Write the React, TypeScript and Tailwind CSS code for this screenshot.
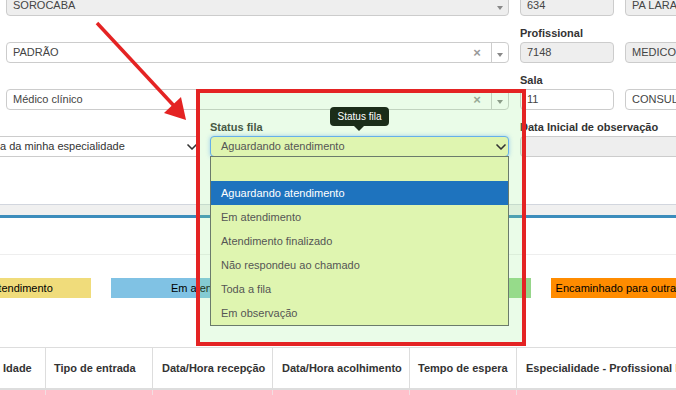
import React from 'react'
import { ChevronDown } from 'lucide-react'

// small grey caret used by the select2 style fields
const Caret = () => (
  <span className="mt-[4px] block h-0 w-0 border-l-[3px] border-r-[3px] border-t-[4px] border-l-transparent border-r-transparent border-t-[#888]" />
)

function Select2({ value, gray, clear }: { value: string; gray?: boolean; clear?: boolean }) {
  return (
    <div className={`flex h-[21px] w-[503px] shrink-0 items-stretch rounded-[4px] border border-[#ccc] ${gray ? 'bg-[#eee]' : 'bg-white'}`}>
      <span className="flex flex-1 items-center pl-[6px] text-[#444]">{value}</span>
      {clear && (
        <>
          <span className="flex w-[8px] items-center justify-center text-[13px] font-bold text-[#999]">×</span>
          <span className="ml-[10px] w-px bg-[#ccc]" />
        </>
      )}
      <span className="flex w-[16px] items-center justify-center">
        <Caret />
      </span>
    </div>
  )
}

function Input({ value, gray, w }: { value: string; gray?: boolean; w: string }) {
  return (
    <div className={`flex h-[21px] shrink-0 items-center whitespace-nowrap rounded-[4px] border border-[#ccc] pl-[6px] text-[#444] ${w} ${gray ? 'bg-[#eee]' : 'bg-white'}`}>
      {value}
    </div>
  )
}

const Label = ({ text, w }: { text: string; w: string }) => (
  <div className={`h-[14px] shrink-0 whitespace-nowrap text-[11px] font-bold leading-[14px] text-[#333] ${w}`}>{text}</div>
)

const legend = [
  { label: 'Aguardando atendimento', cls: 'bg-[#f0dc7b]' },
  { label: 'Em atendimento', cls: 'bg-[#80c2e4]' },
  { label: 'Atendimento finalizado', cls: 'bg-[#96d68a]' },
  { label: 'Encaminhado para outra especialidade', cls: 'bg-[#ff8c00]' },
]

const columns = [
  { name: 'Idade', w: 'w-[51px]' },
  { name: 'Tipo de entrada', w: 'w-[107px]' },
  { name: 'Data/Hora recepção', w: 'w-[120px] pl-[9px]' },
  { name: 'Data/Hora acolhimento', w: 'w-[137px] pl-[9px]' },
  { name: 'Tempo de espera', w: 'w-[107px]' },
  { name: 'Especialidade - Profissional Responsável', w: 'w-[300px] pl-[9px]' },
]

const options = ['Em atendimento', 'Atendimento finalizado', 'Não respondeu ao chamado', 'Toda a fila', 'Em observação']

export default function App() {
  return (
    <div className="relative h-[395px] w-[676px] overflow-hidden bg-white font-['Liberation_Sans',Arial,sans-serif] text-[11px]">
      {/* filter form box */}
      <div className="w-[800px] border-b border-[#d2d6de] px-[6px] pb-[47px]">
        <div className="-mt-[5px] flex gap-[11px]">
          <Select2 value="SOROCABA" gray />
          <Input value="634" gray w="w-[94px]" />
          <Input value="PA LARANJEIRAS" gray w="w-[160px]" />
        </div>

        <div className="mt-[10px] flex gap-[11px]">
          <Label text="" w="w-[503px]" />
          <Label text="Profissional" w="w-[94px]" />
        </div>
        <div className="mt-[2px] flex gap-[11px]">
          <Select2 value="PADRÃO" clear />
          <Input value="7148" gray w="w-[94px]" />
          <Input value="MEDICO CLINICO" gray w="w-[160px]" />
        </div>

        <div className="mt-[10px] flex gap-[11px]">
          <Label text="" w="w-[503px]" />
          <Label text="Sala" w="w-[94px]" />
        </div>
        <div className="mt-[2px] flex gap-[11px]">
          <Select2 value="Médico clínico" clear />
          <Input value="11" w="w-[94px]" />
          <Input value="CONSULTÓRIO 11" w="w-[160px]" />
        </div>

        <div className="mt-[10px] -ml-[12px] flex gap-[11px]">
          <Label text="" w="w-[205px]" />
          <Label text="Status fila" w="w-[299px]" />
          <Label text="Data Inicial de observação" w="w-[200px]" />
        </div>
        <div className="mt-[2px] -ml-[12px] flex gap-[11px]">
          <div className="flex h-[21px] w-[205px] shrink-0 items-center justify-between border border-[#ccc] bg-white pl-[5px] text-[#333]">
            <span className="whitespace-nowrap">a da minha especialidade</span>
            <ChevronDown size={16} strokeWidth={2.5} className="-mr-[2px] text-[#333]" />
          </div>
          <div className="relative z-20 flex h-[21px] w-[299px] shrink-0 items-center justify-between rounded-[4px] border border-[#66afe9] bg-[#dff5b0] pl-[10px] text-[#555] shadow-[0_0_4px_rgba(102,175,233,0.6)]">
            <span>Aguardando atendimento</span>
            <ChevronDown size={16} strokeWidth={2.5} className="-mr-[1px] text-[#333]" />
          </div>
          <div className="h-[21px] w-[200px] shrink-0 rounded-[4px] border border-[#ccc] bg-[#eee]" />
        </div>
      </div>

      <div className="h-[10px] bg-[#f0f0f0]" />

      {/* list box */}
      <div className="border-t-[3px] border-[#3c8dbc]">
        <div className="h-[37px] border-b border-[#eee]" />
        <div className="mt-[23px] -ml-[109px] flex gap-[20px]">
          {legend.map((l) => (
            <div key={l.label} className={`flex h-[20px] w-[200px] shrink-0 items-center justify-center whitespace-nowrap text-black ${l.cls}`}>
              {l.label}
            </div>
          ))}
        </div>

        <div className="mt-[49px] -ml-[5px] w-[900px]">
          <div className="flex border-b-2 border-t border-[#ddd]">
            {columns.map((c) => (
              <div key={c.name} className={`flex h-[40px] shrink-0 items-center whitespace-nowrap border-r border-[#ddd] pl-[8px] font-bold text-[#333] ${c.w}`}>
                {c.name}
              </div>
            ))}
          </div>
          <div className="flex bg-[#ffc0cb]">
            {columns.map((c) => (
              <div key={c.name} className={`h-[30px] shrink-0 border-r border-[#f3dde1] ${c.w}`} />
            ))}
          </div>
        </div>
      </div>

      {/* annotation box */}
      <div className="pointer-events-none absolute left-[196px] top-[89px] z-10 h-[257px] w-[330px] border-4 border-[#e42323] bg-[rgba(150,240,140,0.2)]" />

      {/* tooltip */}
      <div className="absolute left-[330px] top-[107px] z-20 flex h-[19px] w-[59px] items-center justify-center rounded-[4px] bg-[#1b2d19] text-[10px] text-white">
        Status fila
        <span className="absolute left-[24px] top-[19px] h-0 w-0 border-l-[5px] border-r-[5px] border-t-[5px] border-l-transparent border-r-transparent border-t-[#1b2d19]" />
      </div>

      {/* open dropdown list */}
      <div className="absolute left-[210px] top-[156px] z-20 w-[299px] border border-[#6b7b6b] bg-[#dff5b0] text-[#555]">
        <div className="h-[24px]" />
        <div className="flex h-[24px] items-center bg-[#1e73be] pl-[10px] text-white">Aguardando atendimento</div>
        {options.map((o) => (
          <div key={o} className="flex h-[24px] items-center pl-[10px]">{o}</div>
        ))}
      </div>

      {/* red arrow */}
      <svg className="pointer-events-none absolute left-0 top-0 z-30" width="676" height="395">
        <line x1="97" y1="23" x2="176" y2="108" stroke="#e42323" strokeWidth="3.5" />
        <polygon points="186,120 164,113 181,97" fill="#e42323" />
      </svg>
    </div>
  )
}
